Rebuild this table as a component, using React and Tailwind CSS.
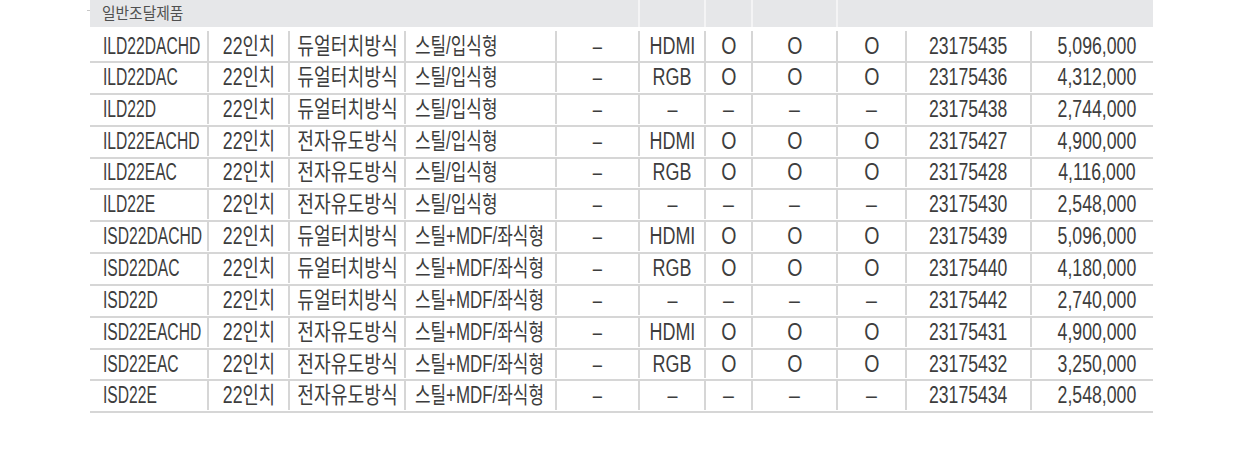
import React from 'react';

// Column widths measured from grid lines
const COLS = '117px 81px 116px 151px 83px 66px 47px 85px 69px 125px 123px';

const rows = [
  ['ILD22DACHD', '듀얼터치방식', '스틸/입식형', 'HDMI', true, '23175435', '5,096,000'],
  ['ILD22DAC', '듀얼터치방식', '스틸/입식형', 'RGB', true, '23175436', '4,312,000'],
  ['ILD22D', '듀얼터치방식', '스틸/입식형', '–', false, '23175438', '2,744,000'],
  ['ILD22EACHD', '전자유도방식', '스틸/입식형', 'HDMI', true, '23175427', '4,900,000'],
  ['ILD22EAC', '전자유도방식', '스틸/입식형', 'RGB', true, '23175428', '4,116,000'],
  ['ILD22E', '전자유도방식', '스틸/입식형', '–', false, '23175430', '2,548,000'],
  ['ISD22DACHD', '듀얼터치방식', '스틸+MDF/좌식형', 'HDMI', true, '23175439', '5,096,000'],
  ['ISD22DAC', '듀얼터치방식', '스틸+MDF/좌식형', 'RGB', true, '23175440', '4,180,000'],
  ['ISD22D', '듀얼터치방식', '스틸+MDF/좌식형', '–', false, '23175442', '2,740,000'],
  ['ISD22EACHD', '전자유도방식', '스틸+MDF/좌식형', 'HDMI', true, '23175431', '4,900,000'],
  ['ISD22EAC', '전자유도방식', '스틸+MDF/좌식형', 'RGB', true, '23175432', '3,250,000'],
  ['ISD22E', '전자유도방식', '스틸+MDF/좌식형', '–', false, '23175434', '2,548,000'],
];

const Cell = ({ children, align = 'center', scale = 'scale-x-[0.72]', first = false, className = '' }) => {
  const justify = align === 'left' ? 'justify-start' : align === 'right' ? 'justify-end' : 'justify-center';
  const origin = align === 'left' ? 'origin-left' : align === 'right' ? 'origin-right' : 'origin-center';
  return (
    <div className={`flex items-center ${justify} ${first ? '' : 'border-l-2 border-[#d6d6d6]'} ${className}`}>
      <span className={`inline-block whitespace-nowrap ${scale} ${origin}`}>{children}</span>
    </div>
  );
};

const Row = ({ row, index }) => {
  const [model, method, body, port, hasO, code, price] = row;
  const mark = hasO ? 'O' : '–';
  const h = index === 0 ? 'h-[36px] pt-[4px]' : 'h-[31.85px] pb-px';
  return (
    <div
      className={`grid border-b-2 border-[#d6d6d6] ${h}`}
      style={{ gridTemplateColumns: COLS }}
    >
      <Cell first align="left" scale="scale-x-[0.68]" className="pl-[13px]">{model}</Cell>
      <Cell scale="scale-x-[0.77]">22인치</Cell>
      <Cell scale="scale-x-[0.79]">{method}</Cell>
      <Cell align="left" scale="scale-x-[0.735]" className="pl-[9px]">{body}</Cell>
      <Cell>–</Cell>
      <Cell scale="scale-x-[0.78]">{port}</Cell>
      <Cell scale="scale-x-[0.85]">{mark}</Cell>
      <Cell scale="scale-x-[0.85]">{mark}</Cell>
      <Cell scale="scale-x-[0.85]">{mark}</Cell>
      <Cell scale="scale-x-[0.765]">{code}</Cell>
      <Cell align="right" scale="scale-x-[0.77]" className="pr-[17px]">{price}</Cell>
    </div>
  );
};

export default function App() {
  return (
    <div
      className="w-[1241px] h-[470px] bg-white text-[#3d3d3d] text-[23px] leading-none"
      style={{ fontFamily: '"Liberation Sans", "Noto Sans CJK KR", sans-serif' }}
    >
      <div className="ml-[90px] w-[1063px]">
        {/* Section header */}
        <div className="relative grid h-[27px] bg-[#e6e7e9]" style={{ gridTemplateColumns: COLS }}>
          <span className="absolute left-[-3px] top-[10px] h-px w-[3px] bg-[#c8c8c8]" />
          <div className="col-span-5 flex items-center pl-[12px] text-[16px] text-[#505050]">
            <span className="inline-block whitespace-nowrap scale-x-[0.92] origin-left">일반조달제품</span>
          </div>
          <div className="border-l-2 border-[#f4f4f5]" />
          <div className="border-l-2 border-[#f4f4f5]" />
          <div className="border-l-2 border-[#f4f4f5]" />
          <div className="border-l-2 border-[#f4f4f5]" />
          <div />
          <div />
        </div>

        {rows.map((row, i) => (
          <Row key={row[0]} row={row} index={i} />
        ))}
      </div>
    </div>
  );
}
